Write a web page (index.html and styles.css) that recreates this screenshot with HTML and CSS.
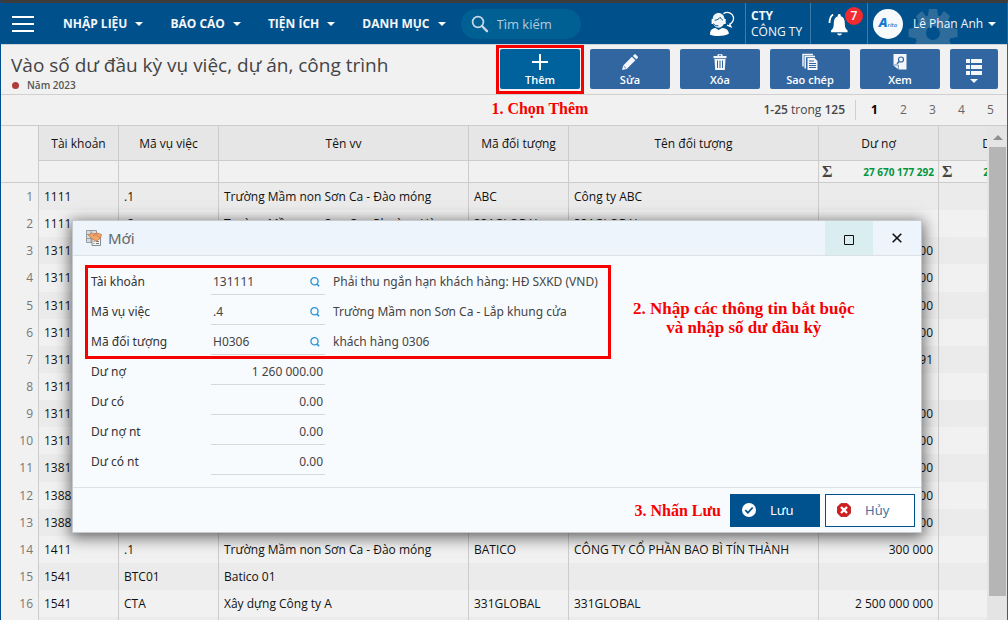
FILE: index.html
```html
<!DOCTYPE html>
<html lang="vi">
<head>
<meta charset="utf-8">
<meta name="viewport" content="width=device-width, initial-scale=1">
<title>Vào số dư đầu kỳ vụ việc, dự án, công trình</title>
<link rel="stylesheet" href="styles.css">
</head>
<body>
<div class="app">
  <header class="topbar">
    <button class="menu-toggle" type="button" aria-label="Menu"><span></span><span></span><span></span></button>
    <nav class="nav">
      <button type="button" class="nav-item">NHẬP LIỆU<i class="caret"></i></button>
      <button type="button" class="nav-item">BÁO CÁO<i class="caret"></i></button>
      <button type="button" class="nav-item">TIỆN ÍCH<i class="caret"></i></button>
      <button type="button" class="nav-item">DANH MỤC<i class="caret"></i></button>
    </nav>
    <label class="search">
      <svg viewBox="0 0 18 18" width="18" height="18" aria-hidden="true"><circle cx="7" cy="7" r="5.4" fill="none" stroke="#c5d8e6" stroke-width="1.7"/><path d="M11 11l5 5.200" stroke="#c5d8e6" stroke-width="2.400" stroke-linecap="round"/></svg>
      <input type="search" placeholder="Tìm kiếm" aria-label="Tìm kiếm">
    </label>
    <div class="topbar-right">
      <button type="button" class="support" aria-label="Hỗ trợ">
        <svg viewBox="0 0 26 26" width="26" height="26"><path d="M14.500 2.600c2-1.300 4.500-1.500 6.700-.4 3.300 1.700 4.200 5 2.500 8.200-.7 1.300-1.700 2.200-2.900 2.800l1.200 2.500-4-1.500" fill="none" stroke="#fff" stroke-width="1.300"/><path d="M3.700 8.200C3.700 4.500 6.100 2 9.500 2s6 2.500 6 6.200v2.100c0 3.500-2.700 6.400-5.900 6.400s-5.900-2.900-5.900-6.400z" fill="#f2f5f8"/><path d="M5.700 9.300c2.400-.3 4.300-1.300 5.500-3 .8 1.600 1.600 2.400 2.700 2.900" fill="none" stroke="#00508b" stroke-width="1"/><path d="M2.600 8h2v5h-2zM14.700 8h2v5h-2z" fill="#fff"/><path d="M4.500 12.500c1 2 2.500 2.300 4.900 2.300" fill="none" stroke="#00508b" stroke-width="1"/><path d="M1 23.700c0-4.200 1.600-6.200 5.300-6.700l3.300 2.100 3.500-2.100c4.500.4 6.600 2.300 6.800 5.800C15 25.500 6 25.500 1 23.700z" fill="#fff"/></svg>
      </button>
      <div class="company"><strong>CTY</strong><span>CÔNG TY</span></div>
      <button type="button" class="bell" aria-label="Thông báo: 7">
        <svg viewBox="0 0 24 26" width="24" height="26"><path d="M4 19.500c2.500-2 2.800-4 2.800-7.500 0-3.700 1.600-6 4-6.700V4.500c0-2 3-2 3 0v.8c2.600.7 4 3 4 6.700 0 3.500.3 5.500 2.800 7.500v1.800H4z" fill="#fff"/><path d="M10 22.500h5c-.7 2.500-4.200 2.500-5 0z" fill="#fff"/><path d="M2.500 12c0-4.500 1.200-7 3.600-8.500" fill="none" stroke="#fff" stroke-width="1.800"/></svg>
        <span class="badge">7</span>
      </button>
      <button type="button" class="user">
        <svg class="gear" viewBox="0 0 50 36" width="50" height="36" aria-hidden="true"><circle cx="25" cy="25" r="12.500" fill="none" stroke="#2e6c9c" stroke-width="11"/><path d="M21 1h8l1.500 8h-11zM42 8l-3.500 8-7-7 4.500-6zM49.500 21v8l-8 1.500v-11zM8 8l3.500 8 7-7L14 3zM.5 21v8l8 1.500v-11zM7 36l3-6 8 6zM43 36l-3-6-8 6z" fill="#2e6c9c"/></svg>
        <span class="avatar"><span class="avatar-name"><b>A</b>rito</span></span>
        <span class="user-name">Lê Phan Anh</span><i class="caret"></i>
      </button>
    </div>
  </header>

  <section class="titlebar">
    <div class="heading">
      <h1>Vào số dư đầu kỳ vụ việc, dự án, công trình</h1>
      <p class="year"><i></i>Năm 2023</p>
    </div>
    <div class="toolbar">
      <div class="step">
        <button type="button" class="tool tool-main">
          <svg viewBox="0 0 18 18" width="18" height="18"><path d="M9 1v16M1 9h16" stroke="#fff" stroke-width="2"/></svg>Thêm
        </button>
      </div>
      <button type="button" class="tool">
        <svg viewBox="0 0 18 18" width="18" height="18"><path d="M1 17l1.200-4.600 8.700-8.600 3.500 3.500-8.700 8.600zM11.900 2.900l1.300-1.400c.5-.5 1.100-.5 1.600 0l1.900 1.900c.5.500.5 1.100 0 1.600l-1.400 1.300z" fill="#f4f6f9"/><path d="M2.600 13l2.400 2.400" stroke="#3165a0" stroke-width=".8"/></svg>Sửa
      </button>
      <button type="button" class="tool">
        <svg viewBox="0 0 18 18" width="18" height="18"><path d="M2.500 3h4V1.200h5V3h4v2.300h-13zM8 2.200V3h2v-.8z" fill="#f4f6f9" fill-rule="evenodd"/><path d="M3.500 6h11l-.7 11H4.200z" fill="#f4f6f9"/><path d="M6.500 7.500v7.500M9 7.500v7.500M11.500 7.500v7.500" stroke="#3165a0" stroke-width="1"/></svg>Xóa
      </button>
      <button type="button" class="tool">
        <svg viewBox="0 0 18 18" width="18" height="18"><path d="M12 1.500H2v12M14 3.500H4.200v12" fill="none" stroke="#f4f6f9" stroke-width="1.500"/><path d="M6.500 5h7l3 3v9h-10z" fill="#f4f6f9"/><path d="M8 8h5M8 10.500h7M8 12.500h7M8 14.500h7" stroke="#3165a0" stroke-width="1"/></svg>Sao chép
      </button>
      <button type="button" class="tool">
        <svg viewBox="0 0 18 18" width="18" height="18"><path d="M2.500 1h13v15.500H7.500l-5-4z" fill="#f4f6f9"/><path d="M3 12h4.300v4.500" fill="none" stroke="#3165a0" stroke-width=".7"/><circle cx="10" cy="6.500" r="2.500" fill="none" stroke="#3165a0" stroke-width="1.200"/><path d="M8.200 8.400L6 10.700" stroke="#3165a0" stroke-width="1.400"/></svg>Xem
      </button>
      <button type="button" class="tool tool-list" aria-label="Danh sách">
        <svg viewBox="0 0 16 24" width="16" height="24"><path d="M0 0h4v4H0zM5 0h11v4H5zM0 6h4v4H0zM5 6h11v4H5zM0 12h4v4H0zM5 12h11v4H5zM4 20h8l-4 4z" fill="#f4f6f9"/></svg>
      </button>
    </div>
  </section>

  <section class="pager">
    <p class="note note-add">1. Chọn Thêm</p>
    <span class="range"><b>1-25</b> trong <b>125</b></span>
    <nav class="pages" aria-label="Trang">
      <a href="#p1" class="current">1</a><a href="#p2">2</a><a href="#p3">3</a><a href="#p4">4</a><a href="#p5">5</a>
    </nav>
  </section>

  <main class="grid">
    <div class="grid-view">
      <table>
        <colgroup><col class="c-no"><col class="c-acc"><col class="c-code"><col class="c-name"><col class="c-code"><col class="c-name"><col class="c-num"><col class="c-num"></colgroup>
        <thead>
          <tr class="head"><th rowspan="2" class="corner"></th><th>Tài khoản</th><th>Mã vụ việc</th><th>Tên vv</th><th>Mã đối tượng</th><th>Tên đối tượng</th><th>Dư nợ</th><th>Dư có</th></tr>
          <tr class="totals"><td></td><td></td><td></td><td></td><td></td><td><div><i>Σ</i><b>27 670 177 292</b></div></td><td><div><i>Σ</i><b>27 670 177 292</b></div></td></tr>
        </thead>
        <tbody>
          <tr><td>1</td><td>1111</td><td>.1</td><td>Trường Mầm non Sơn Ca - Đào móng</td><td>ABC</td><td>Công ty ABC</td><td></td><td></td></tr>
          <tr><td>2</td><td>1111</td><td>.2</td><td>Trường Mầm non Sơn Ca - Phường Hà</td><td>331GLOBAL</td><td>331GLOBAL</td><td></td><td></td></tr>
          <tr><td>3</td><td>131111</td><td></td><td></td><td></td><td></td><td>500 000</td><td></td></tr>
          <tr><td>4</td><td>131111</td><td></td><td></td><td></td><td></td><td>500 000</td><td></td></tr>
          <tr><td>5</td><td>131111</td><td></td><td></td><td></td><td></td><td>500 000</td><td></td></tr>
          <tr><td>6</td><td>131111</td><td></td><td></td><td></td><td></td><td>500 000</td><td></td></tr>
          <tr><td>7</td><td>131111</td><td></td><td></td><td></td><td></td><td>177 291</td><td></td></tr>
          <tr><td>8</td><td>131111</td><td></td><td></td><td></td><td></td><td></td><td></td></tr>
          <tr><td>9</td><td>131111</td><td></td><td></td><td></td><td></td><td>500 000</td><td></td></tr>
          <tr><td>10</td><td>131111</td><td></td><td></td><td></td><td></td><td>500 000</td><td></td></tr>
          <tr><td>11</td><td>138111</td><td></td><td></td><td></td><td></td><td>500 000</td><td></td></tr>
          <tr><td>12</td><td>138811</td><td></td><td></td><td></td><td></td><td>500 000</td><td></td></tr>
          <tr><td>13</td><td>138811</td><td></td><td></td><td></td><td></td><td>500 000</td><td></td></tr>
          <tr><td>14</td><td>1411</td><td>.1</td><td>Trường Mầm non Sơn Ca - Đào móng</td><td>BATICO</td><td>CÔNG TY CỔ PHẦN BAO BÌ TÍN THÀNH</td><td>300 000</td><td></td></tr>
          <tr><td>15</td><td>1541</td><td>BTC01</td><td>Batico 01</td><td></td><td></td><td></td><td></td></tr>
          <tr><td>16</td><td>1541</td><td>CTA</td><td>Xây dựng Công ty A</td><td>331GLOBAL</td><td>331GLOBAL</td><td>2 500 000 000</td><td></td></tr>
          <tr><td></td><td></td><td></td><td></td><td></td><td></td><td></td><td></td></tr>
        </tbody>
      </table>
    </div>
    <div class="scrollbar"><i class="scroll-up"></i><div class="scroll-thumb"></div></div>
  </main>

  <form class="dialog" role="dialog" aria-labelledby="dialog-title">
    <header class="dialog-head">
      <svg viewBox="0 0 16 16" width="16" height="16" aria-hidden="true"><path d="M.5.500h10v12h-10zM.5 4.500h10M.5 8.500h10M5 .5v12" fill="#d9dddf" stroke="#969b9f"/><path d="M6 8h8.500v7.500H6z" fill="#f2f4f5" stroke="#85898c"/><path d="M7.500 11.500h1M10 11.500h3M7.500 13.500h1M10 13.500h3" stroke="#777"/><path d="M2.500 5l3-2 2.500 1 3-1L15.500 4.500 14.500 8l-3 2.500-2 .5-4.500-3z" fill="#f2a56c" stroke="#bf7440" stroke-width=".8"/><path d="M7 6l3-1.500L14 8" fill="none" stroke="#bf7440" stroke-width=".7"/></svg>
      <h2 id="dialog-title">Mới</h2>
      <button type="button" class="win win-max" aria-label="Phóng to"><svg viewBox="0 0 10 10" width="10" height="10"><path d="M.5.500h9v9h-9z" fill="none" stroke="#111"/></svg></button>
      <button type="button" class="win" aria-label="Đóng"><svg viewBox="0 0 10 10" width="10" height="10"><path d="M.7.700l8.600 8.600M9.300.700L.7 9.300" stroke="#111" stroke-width="1.600"/></svg></button>
    </header>
    <div class="dialog-body">
      <div class="field"><label for="f1">Tài khoản</label><div class="lookup"><input id="f1" value="131111"><button type="button" aria-label="Tìm tài khoản"><svg viewBox="0 0 10 10" width="10" height="10"><circle cx="4.500" cy="4.300" r="3.600" fill="none" stroke="#2a93d5" stroke-width="1.300"/><path d="M6.800 6.800L9 9.300" stroke="#2a93d5" stroke-width="1.700"/></svg></button></div><span class="desc">Phải thu ngắn hạn khách hàng: HĐ SXKD (VND)</span></div>
      <div class="field"><label for="f2">Mã vụ việc</label><div class="lookup"><input id="f2" value=".4"><button type="button" aria-label="Tìm vụ việc"><svg viewBox="0 0 10 10" width="10" height="10"><circle cx="4.500" cy="4.300" r="3.600" fill="none" stroke="#2a93d5" stroke-width="1.300"/><path d="M6.800 6.800L9 9.300" stroke="#2a93d5" stroke-width="1.700"/></svg></button></div><span class="desc">Trường Mầm non Sơn Ca - Lắp khung cửa</span></div>
      <div class="field"><label for="f3">Mã đối tượng</label><div class="lookup"><input id="f3" value="H0306"><button type="button" aria-label="Tìm đối tượng"><svg viewBox="0 0 10 10" width="10" height="10"><circle cx="4.500" cy="4.300" r="3.600" fill="none" stroke="#2a93d5" stroke-width="1.300"/><path d="M6.800 6.800L9 9.300" stroke="#2a93d5" stroke-width="1.700"/></svg></button></div><span class="desc">khách hàng 0306</span></div>
      <div class="field"><label for="f4">Dư nợ</label><div class="lookup amount"><input id="f4" value="1 260 000.00"></div></div>
      <div class="field"><label for="f5">Dư có</label><div class="lookup amount"><input id="f5" value="0.00"></div></div>
      <div class="field"><label for="f6">Dư nợ nt</label><div class="lookup amount"><input id="f6" value="0.00"></div></div>
      <div class="field"><label for="f7">Dư có nt</label><div class="lookup amount"><input id="f7" value="0.00"></div></div>
      <div class="mark"></div>
      <p class="note note-fill">2. Nhập các thông tin bắt buộc<br>và nhập số dư đầu kỳ</p>
    </div>
    <footer class="dialog-foot">
      <p class="note">3. Nhấn Lưu</p>
      <button type="submit" class="action save"><svg viewBox="0 0 14 14" width="14" height="14"><circle cx="7" cy="7" r="7" fill="#fff"/><path d="M3.300 7.200l2.600 2.600 4.800-5.300" fill="none" stroke="#00528f" stroke-width="1.800"/></svg><span>Lưu</span></button>
      <button type="button" class="action cancel"><svg viewBox="0 0 14 14" width="14" height="14"><path d="M4 .4h6L13.600 4v6L10 13.600H4L.4 10V4z" fill="#d31c20" stroke="#a6161a" stroke-width=".8"/><path d="M4 4l6 6M10 4l-6 6" stroke="#fff" stroke-width="2.400"/></svg><span>Hủy</span></button>
    </footer>
  </form>
</div>
</body>
</html>
```

FILE: styles.css
```css
* { box-sizing: border-box; }
body {
  margin: 0;
  font: 12px/16px "Open Sans", "Noto Sans", sans-serif;
  color: #111;
  background: #f1f1f1;
}
button, input { font: inherit; color: inherit; border: 0; padding: 0; margin: 0; background: none; }
h1, h2, p { margin: 0; font-weight: 400; }
svg { display: block; flex: none; }

.app {
  position: relative;
  display: flex;
  flex-direction: column;
  height: 100vh;
  overflow: hidden;
  border-top: 3px solid #3d3b3b;
  border-left: 1px solid #004f8c;
  border-right: 1px solid #55595d;
}

/* Top navigation */
.topbar {
  display: flex;
  align-items: center;
  flex: none;
  height: 42px;
  background: #00508b;
  border-bottom: 1px solid #c9d3da;
  color: #f4f7fa;
}
.menu-toggle { display: flex; flex-direction: column; gap: 5px; width: 22px; margin-left: 11px; }
.menu-toggle span { height: 2px; background: #fff; }
.nav { display: flex; gap: 27px; margin-left: 29px; }
.nav-item { display: flex; align-items: center; gap: 8px; font-weight: 700; }
.caret { flex: none; border: 4px solid transparent; border-top-color: #fff; border-bottom: 0; }
.search {
  display: flex;
  align-items: center;
  gap: 8px;
  width: 120px;
  height: 30px;
  margin-left: 15px;
  padding-left: 10px;
  border-radius: 15px;
  background: #005f93;
}
.search input { width: 76px; font-size: 13px; }
.search input::placeholder { color: #b3cbdc; opacity: 1; }
.topbar-right { display: flex; align-self: stretch; margin-left: auto; }
.topbar-right > * { border-left: 1px solid #3f7ba8; }
.topbar-right .support { border: 0; width: 36px; }
.company {
  display: flex;
  flex-direction: column;
  justify-content: center;
  width: 65px;
  padding-left: 5px;
}
.bell { position: relative; width: 57px; padding-left: 16px; }
.badge {
  position: absolute;
  top: 4px;
  right: 4px;
  width: 18px;
  height: 18px;
  border-radius: 50%;
  background: #f12b2f;
  color: #fff;
  font-weight: 600;
  line-height: 18px;
  text-align: center;
}
.user { position: relative; display: flex; align-items: center; width: 140px; padding-left: 5px; }
.gear { position: absolute; right: 49px; bottom: 0; }
.avatar, .user-name { position: relative; }
.avatar {
  width: 30px;
  height: 30px;
  border-radius: 50%;
  background: #f7fafc;
  color: #1479cf;
  line-height: 26px;
  text-align: center;
}
.avatar-name { font-size: 6px; font-weight: 600; font-style: italic; }
.avatar-name b { font-size: 13px; }
.user-name { margin: 0 5px 0 10px; white-space: nowrap; }

/* Page title and actions */
.titlebar {
  display: flex;
  justify-content: space-between;
  flex: none;
  height: 50px;
  border-bottom: 1px solid #d0d0d0;
}
.heading { padding: 8px 0 0 10px; white-space: nowrap; }
.heading h1 { font-size: 19px; line-height: 24px; color: #444; }
.year { display: flex; align-items: center; gap: 8px; font-size: 10px; line-height: 16px; font-weight: 600; color: #555; }
.year i { width: 7px; height: 7px; margin-left: 1px; border-radius: 50%; background: #b13b3b; }
.toolbar { display: flex; gap: 10px; padding: 4px 9px 0 0; }
.tool {
  display: flex;
  flex-direction: column;
  align-items: center;
  width: 80px;
  height: 40px;
  padding-top: 4px;
  border-radius: 2px;
  background: #3266a1;
  color: #fff;
  font-size: 11px;
  line-height: 18px;
  font-weight: 600;
}
.tool-main { background: #00629d; }
.tool-list { width: 48px; padding-top: 10px; }
.step { height: 49px; margin: -4px; padding: 1px; border: 3px solid #f60000; }

/* Paging */
.pager { display: flex; align-items: center; justify-content: flex-end; flex: none; height: 30px; color: #444; white-space: nowrap; }
.range { margin-left: 175px; }
.range b { font-weight: 600; }
.pages { display: flex; margin: 0 2px 0 10px; border-left: 1px solid #cfcfcf; padding-left: 4px; }
.pages a { width: 29px; line-height: 20px; text-align: center; color: #666; text-decoration: none; }
.pages .current { color: #000; font-weight: 700; }

/* Notes drawn over the screens */
.note {
  color: #f60000;
  font: 700 16px/19px "Liberation Serif", serif;
  text-align: center;
  white-space: nowrap;
}
.note-add { padding-bottom: 3px; }

/* Data grid */
.grid { display: flex; flex: 1; min-height: 0; border-top: 1px solid #ccc; }
.grid-view { flex: 1; min-width: 0; overflow: hidden; }
table { width: 1058px; table-layout: fixed; border-collapse: separate; border-spacing: 0; }
.c-no { width: 38px; }
.c-acc { width: 80px; }
.c-code { width: 100px; }
.c-name { width: 250px; }
.c-num { width: 120px; }
th, td { padding: 0 5px; border-right: 1px solid #ccc; text-align: left; white-space: nowrap; overflow: hidden; }
.head th { height: 35px; padding-top: 2px; background: #e6e6e6; border-bottom: 1px solid #ccc; font-weight: 500; text-align: center; }
.head .corner { background: #f1f1f1; }
.totals td { height: 22px; padding: 0 4px 0 3px; border-bottom: 1px solid #ccc; }
.totals div { display: flex; align-items: center; justify-content: space-between; }
.totals i { font: 700 16px/20px "Liberation Serif", serif; color: #444; }
.totals b { font-size: 10px; font-weight: 700; color: #009640; }
tbody td { height: 27px; }
tbody tr:nth-child(7n + 4) td { height: 28px; }
tbody tr:nth-child(odd) td { background: #ebebeb; }
tbody td:first-child, tbody tr:nth-child(odd) td:first-child { background: #f1f1f1; color: #777; text-align: right; }
tbody td:nth-child(n + 7) { text-align: right; }
.scrollbar { width: 20px; padding: 9px 1px 24px 2px; background: #e4e4e4; display: flex; flex-direction: column; align-items: center; gap: 7px; }
.scroll-up { border: 5px solid transparent; border-top: 0; border-bottom-color: #909090; }
.scroll-thumb { align-self: stretch; flex: 1; background: #b5b5b5; }

/* Entry window */
.dialog {
  position: absolute;
  top: 217px;
  left: 71px;
  right: 85px;
  border: 1px solid #c6cacd;
  background: #f8fbfe;
  box-shadow: 0 3px 14px 2px rgba(0, 0, 0, .55);
  color: #444;
  font-family: "Noto Sans", "Open Sans", sans-serif;
}
.dialog-head { display: flex; align-items: center; height: 35px; padding-left: 13px; background: #edf4fb; border-bottom: 1px solid #dce1e6; }
.dialog-head h2 { flex: 1; margin-left: 6px; font-size: 15px; line-height: 20px; color: #666; }
.win { display: flex; align-items: center; justify-content: center; align-self: stretch; width: 48px; }
.win-max { padding-top: 4px; background: #daedf1; }
.dialog-body { position: relative; padding: 9px 18px 12px; }
.field { display: grid; grid-template-columns: 120px 114px 1fr; height: 30px; line-height: 28px; }
.field label { padding-top: 3px; color: #333; }
.lookup { display: flex; align-items: center; height: 30px; padding-top: 4px; border-bottom: 1px solid #d5d9dc; }
.lookup input { flex: 1; width: 0; padding-left: 2px; }
.lookup button { margin-right: 5px; }
.lookup .amount { padding: 0; }
.amount input { padding: 0 2px 0 0; text-align: right; }
.desc { padding: 3px 0 0 8px; white-space: nowrap; }
.mark { position: absolute; top: 9px; left: 12px; width: 526px; height: 94px; border: 3px solid #f60000; }
.note-fill { position: absolute; top: 43px; left: 560px; font-size: 17px; }
.dialog-foot { display: flex; align-items: center; justify-content: flex-end; gap: 5px; height: 45px; padding-right: 6px; border-top: 1px solid #dce1e6; }
.dialog-foot .note { margin-right: 4px; }
.action { display: flex; align-items: center; width: 90px; height: 33px; padding-left: 11px; gap: 14px; border: 1px solid #00528f; font-size: 13px; }
.save { background: #00528f; color: #fff; }
.cancel { background: #fff; color: #42749c; }
```
